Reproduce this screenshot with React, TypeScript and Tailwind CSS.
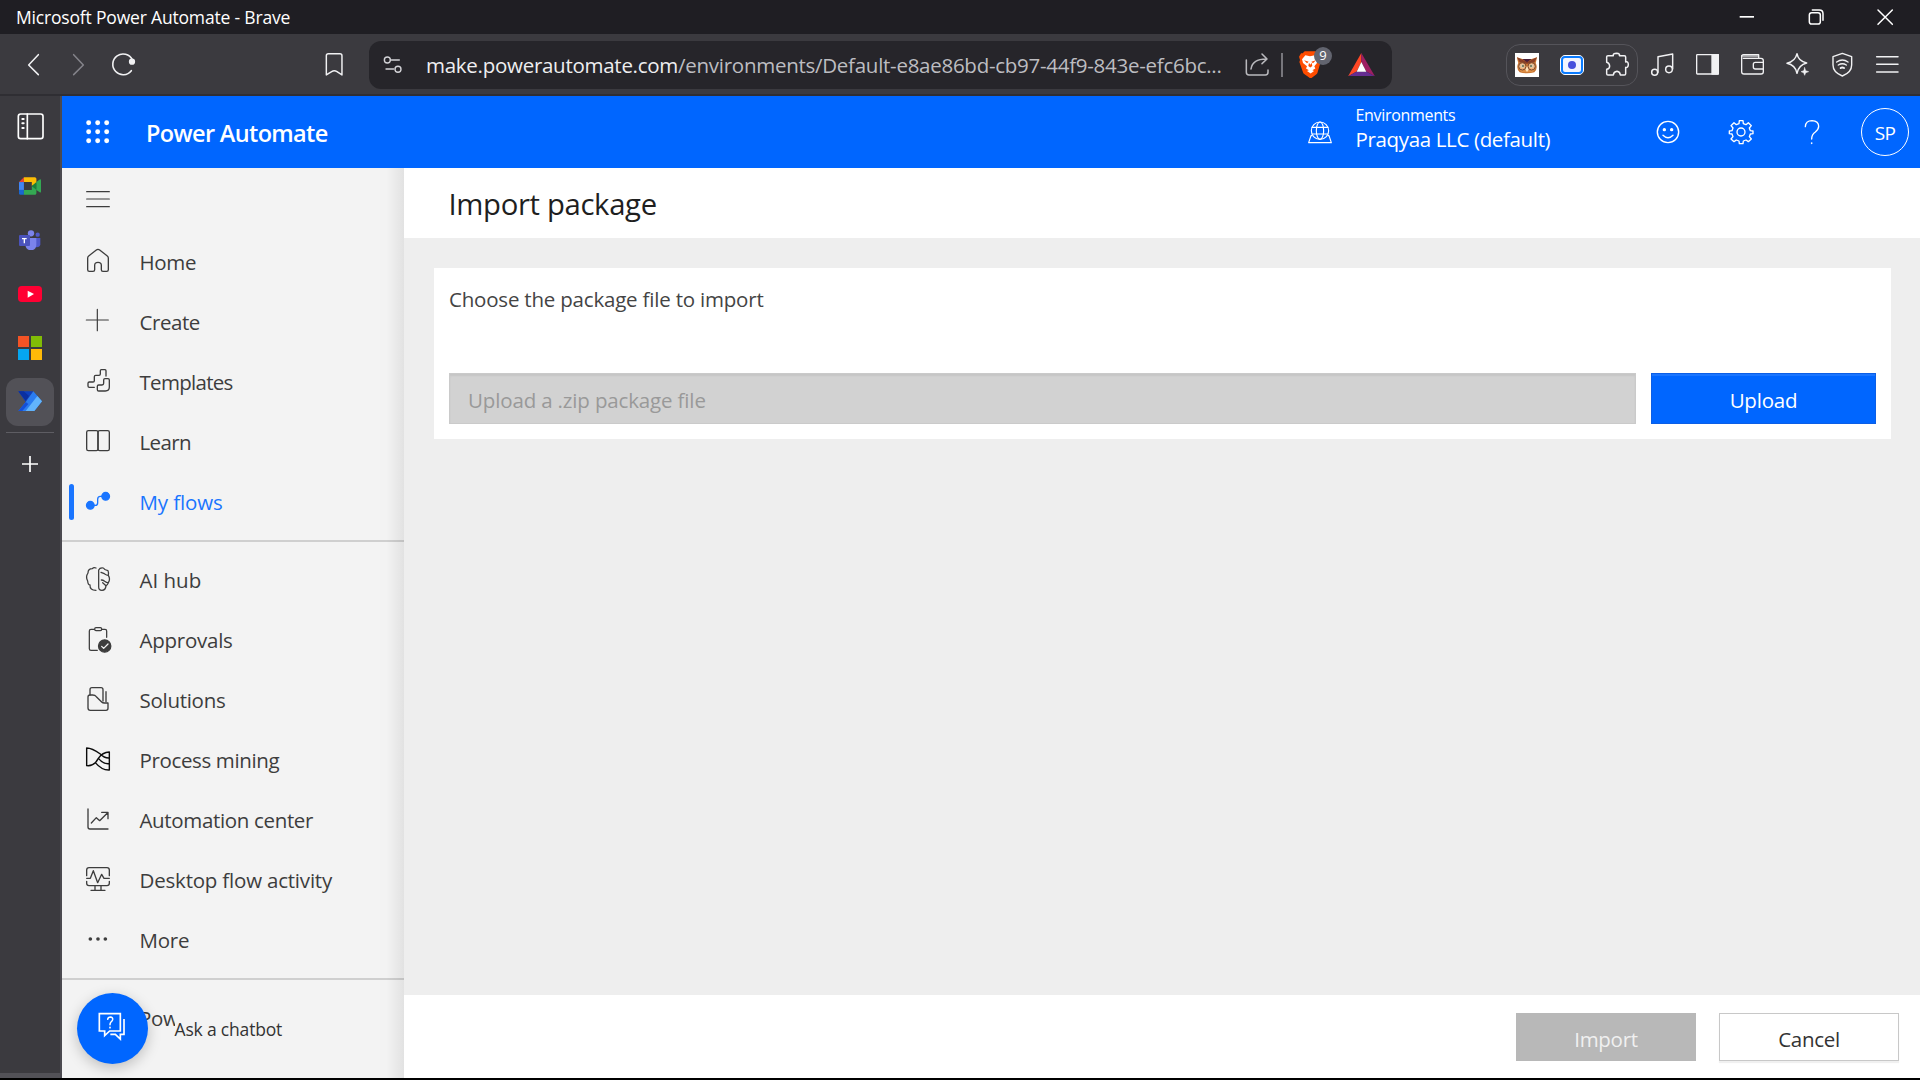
import type { ReactNode } from "react";
import clsx from "clsx";

type IcoProps = { vb: string; w?: number; h?: number; sw?: number; className?: string; children: ReactNode };

/** Line icon; the view boxes use a grid of three units per pixel. */
function Ico({ vb, w = 24, h = 24, sw = 3.6, className, children }: IcoProps) {
  return (
    <svg
      viewBox={vb}
      width={w}
      height={h}
      fill="none"
      stroke="currentColor"
      strokeWidth={sw}
      strokeLinecap="round"
      strokeLinejoin="round"
      className={clsx("block shrink-0 overflow-visible", className)}
    >
      {children}
    </svg>
  );
}

/* ---------- Window title bar ---------- */

function TitleBar() {
  return (
    <header className="flex h-[34px] shrink-0 items-center justify-between bg-[#1f1e23] pl-4 text-white">
      <span className="text-[17.5px] leading-[35px] tracking-[-0.18px]">Microsoft Power Automate - Brave</span>
      <div className="flex h-full pr-px">
        <div className="grid w-[69px] place-items-center">
          <Ico vb="0 0 48 48" w={16} h={16} sw={5}>
            <path d="M2 23.5H45" strokeLinecap="butt" />
          </Ico>
        </div>
        <div className="grid w-[69px] place-items-center">
          <Ico vb="985 28 48 48" w={16} h={16} sw={4.5}>
            <rect x="989" y="39" width="33" height="34" rx="7" />
            <path d="M998 31H1019Q1030 31 1030 42V62" />
          </Ico>
        </div>
        <div className="grid w-[69px] place-items-center">
          <Ico vb="1192 28 48 48" w={16} h={16} sw={4.5}>
            <path d="M1195 31L1238 74M1238 31L1195 74" />
          </Ico>
        </div>
      </div>
    </header>
  );
}

/* ---------- Browser toolbar ---------- */

function BraveLion() {
  return (
    <svg viewBox="297 153 66 83" width={22} height={27.6} className="block">
      <path d="M314 154H346L352 160L358 160L362 170L360 180L362 186L352 220Q350 224 332 236Q314 224 310 220L298 186L300 180L297 170L303 160L308 160Z" fill="#ff4d00" />
      <path
        d="M316 166L330 169L344 166L354 178L351 189L343 199L346 206L332 214L318 206L321 199L309 189L306 178Z"
        fill="#fff"
      />
      <path d="M312 181L326 185L321 190ZM348 181L334 185L339 190ZM327 188L325 198L331 203L337 198L335 188L331 194Z" fill="#ff4d00" />
      <path d="M321 213L332 208L342 213L332 221Z" fill="#fff" />
    </svg>
  );
}

function Owl() {
  return (
    <svg viewBox="0 0 72 72" width={24} height={24} className="block bg-white">
      <path d="M6 13L22 18H50L66 13Q64 24 62 30Q70 46 58 58Q36 64 14 58Q2 46 10 30Q7 22 6 13Z" fill="#c9732f" />
      <path d="M6 13L36 27L66 13L58 28L38 32H34L14 28Z" fill="#8a3f26" />
      <path d="M22 18H50L36 28Z" fill="#4a1f3a" />
      <path d="M10 46L20 58H52L62 46L50 52H22Z" fill="#dd8e45" />
      <circle cx="22" cy="40" r="11" fill="#f0b27a" stroke="#7a4a30" strokeWidth="3" />
      <circle cx="50" cy="40" r="11" fill="#f0b27a" stroke="#7a4a30" strokeWidth="3" />
      <circle cx="22" cy="39" r="6" fill="#d9c9ae" />
      <circle cx="50" cy="39" r="6" fill="#d9c9ae" />
      <circle cx="24" cy="39" r="3" fill="#5d6b50" />
      <circle cx="48" cy="39" r="3" fill="#5d6b50" />
      <path d="M36 38L41 50L36 57L31 50Z" fill="#fbe0b8" />
    </svg>
  );
}

function Slot({ children }: { children: ReactNode }) {
  return <div className="grid h-full w-[45px] shrink-0 place-items-center">{children}</div>;
}

function Toolbar() {
  return (
    <div className="flex h-[62px] shrink-0 items-center border-b-2 border-[#2f2e33] bg-[#3b3a3f] pt-px text-[#f1f1f3]">
      <div className="flex w-[369px] shrink-0 items-center pl-[26px]">
        <Ico vb="78 158 45 72" w={15} h={24} sw={4.6}>
          <path d="M115 163L86 194L115 223" />
        </Ico>
        <Ico vb="213 158 45 72" w={15} h={24} sw={4.6} className="ml-[30px] text-[#84838a]">
          <path d="M221 163L250 194L221 223" />
        </Ico>
        <Ico vb="332 157 75 75" w={25} h={25} sw={4.8} className="ml-[24.500px]">
          <path d="M393 213A31 31 0 1 1 396 180" />
          <circle cx="395" cy="186" r="7" fill="currentColor" />
        </Ico>
        <Ico vb="976 157 55 73" w={18.3} h={24.3} sw={4.4} className="ml-[189.500px]">
          <path d="M980 226V168Q980 162 986 162H1021Q1027 162 1027 168V226L1012 216Q1004 211 996 216Z" />
        </Ico>
      </div>

      <div className="flex h-12 w-[1023px] shrink-0 items-center rounded-xl bg-[#26252a]">
        <Ico vb="1150 166 60 58" w={20} h={19.3} sw={4.2} className="ml-[14px] text-[#d3d3d7]">
          <circle cx="1163" cy="181" r="9" />
          <path d="M1175 181H1199M1159 208H1182" />
          <circle cx="1195" cy="209" r="9" />
        </Ico>
        <span className="ml-[23px] w-[799px] shrink-0 pt-px text-[20.5px] leading-[47px] tracking-[-0.27px] whitespace-nowrap text-[#bdbdc1]">
          <span className="text-[#eeeef0]">make.powerautomate.com</span>
          /environments/Default-e8ae86bd-cb97-44f9-843e-efc6bc...
        </span>
        <Ico vb="136 160 75 75" w={25} h={25} sw={4.6} className="ml-5 text-[#b9b9bd]">
          <path d="M140 184V221Q140 229 148 229H197Q205 229 205 221V214" />
          <path d="M154 211Q158 181 200 181M187 166L202 181L187 195" />
        </Ico>
        <div className="ml-[11px] h-6 w-0.5 bg-[#77767c]" />
        <div className="relative ml-4">
          <BraveLion />
          <div className="absolute top-[-4px] left-[15px] grid h-[18px] w-[18px] place-items-center rounded-full bg-[#62646f] text-[13px] leading-none text-white">
            9
          </div>
        </div>
        <svg viewBox="445 158 81 70" width={27} height={23.5} className="ml-[27px] block">
          <path d="M485 158L485 185L471 213L445 228Z" fill="#ff4724" />
          <path d="M485 158L526 228L500 213L485 185Z" fill="#9e1f63" />
          <path d="M445 228L471 213H500L526 228Z" fill="#662d91" />
          <path d="M485 185L500 214H471Z" fill="#fff" />
        </svg>
      </div>

      <div className="ml-[114px] flex h-[42px] w-[132px] shrink-0 items-center justify-center rounded-[14px] border border-[#55545a]">
        <Slot>
          <Owl />
        </Slot>
        <Slot>
          <div className="grid h-5 w-6 place-items-center rounded-[5px] border border-white bg-white">
            <div className="grid h-[18px] w-[22px] place-items-center rounded-[4px] border-2 border-[#0a7bff] bg-[#f2f5ff]">
              <div className="h-2 w-2 rounded-full bg-[#4650dc]" />
            </div>
          </div>
        </Slot>
        <Slot>
          <Ico vb="375 160 75 75" w={25} h={25} sw={4.4}>
            <path d="M380 174Q380 171 384 171H400Q398 164 410 164Q421 165 418 171H433Q437 171 437 175V190Q445 187 445 198Q444 208 437 206V225Q437 229 433 229H421Q420 219 411 218Q401 219 400 229H384Q380 229 380 225V212Q389 211 389 202Q388 193 380 191Z" />
          </Ico>
        </Slot>
      </div>
      <div className="ml-0.5 flex h-full items-center">
        <Slot>
          <Ico vb="511 159 75 75" w={25} h={25} sw={4.4}>
            <circle cx="525" cy="220" r="9" />
            <circle cx="568" cy="211" r="10" />
            <path d="M535 220V173L579 165V210" />
          </Ico>
        </Slot>
        <Slot>
          <Ico vb="645 157 75 75" w={25} h={25} sw={4}>
            <rect x="650" y="165" width="65" height="58" rx="2" />
            <path d="M696 165H715V223H696Z" fill="currentColor" />
          </Ico>
        </Slot>
        <Slot>
          <Ico vb="780 157 75 75" w={25} h={25} sw={4}>
            <path d="M785 168V216Q785 223 792 223H843Q850 223 850 216V183Q850 176 843 176H790" />
            <path d="M787 169H835" stroke="#a3a3a7" strokeWidth="8" strokeLinecap="butt" />
            <path d="M785 171Q785 165 791 165H836V176M850 188H826Q820 188 820 194V202Q820 208 826 208H850" />
          </Ico>
        </Slot>
        <Slot>
          <Ico vb="915 157 75 75" w={25} h={25} sw={4.4}>
            <path d="M951 162Q955 185 980 190Q956 196 951 221Q946 196 921 191Q946 185 951 162Z" />
            <path d="M974 204L977 213L986 216L977 219L974 227L971 219L963 216L971 213Z" fill="currentColor" strokeWidth="1.5" />
          </Ico>
        </Slot>
        <Slot>
          <Ico vb="1050 157 75 75" w={25} h={25} sw={4.2}>
            <path d="M1087 161L1115 171V196Q1115 218 1087 229Q1059 218 1059 196V171Z" />
            <path d="M1070 187Q1087 175 1104 187M1075 196Q1087 188 1099 196" />
            <path d="M1082 205Q1087 202 1092 205" strokeWidth="6" />
          </Ico>
        </Slot>
        <Slot>
          <Ico vb="1185 157 75 75" w={25} h={25} sw={4.6}>
            <path d="M1190 171H1254M1190 194H1254M1190 217H1254" />
          </Ico>
        </Slot>
      </div>
    </div>
  );
}

/* ---------- Browser sidebar ---------- */

function Cell({ children }: { children: ReactNode }) {
  return <div className="grid h-[54px] w-full shrink-0 place-items-center">{children}</div>;
}

function BrowserSidebar() {
  return (
    <aside className="flex w-[62px] shrink-0 flex-col border-r-2 border-[#4b4a50] bg-[#3b3a3f] text-white">
      <div className="flex flex-1 flex-col items-center">
        <div className="grid h-[63px] w-full place-items-center pb-[2px] pl-[1px]">
          <Ico vb="51 339 81 81" w={27} h={27} sw={5}>
            <rect x="55" y="342" width="74" height="74" rx="7" />
            <path d="M82 342V416" />
            <path d="M67 357H71M67 370H71M67 384H71" strokeWidth="6" />
          </Ico>
        </div>
        <Cell>
          <svg viewBox="57 531 67 54" width={22} height={18} className="block">
            <path d="M57 546L72 531V546Z" fill="#ea4335" />
            <path d="M57 546H72V570H57Z" fill="#4285f4" />
            <path d="M57 570H72V585H62Q57 585 57 580Z" fill="#1967d2" />
            <path d="M72 531H105Q110 531 110 536V550L96 558V546H72Z" fill="#fbbc04" />
            <path d="M72 570H96V558L110 566V580Q110 585 105 585H72Z" fill="#34a853" />
            <path d="M96 558L110 546V570Z" fill="#188038" />
            <path d="M110 546L120 538Q124 536 124 541V575Q124 580 120 577L110 570Z" fill="#34a853" />
          </svg>
        </Cell>
        <Cell>
          <svg viewBox="57 29 66 62" width={22} height={20.7} className="block">
            <circle cx="113" cy="43" r="6.5" fill="#5059c9" />
            <path d="M98 53H121V72Q120 81 110 81Q102 81 98 74Z" fill="#5059c9" />
            <circle cx="93" cy="39" r="9.5" fill="#7b83eb" />
            <path d="M78 53H109V73Q108 90 92 90Q78 89 76 73Z" fill="#7b83eb" />
            <rect x="57" y="44" width="33" height="33" rx="3" fill="#4b53bc" />
            <path d="M66 53H80V56.500H75V69H71V56.500H66Z" fill="#fff" />
          </svg>
        </Cell>
        <Cell>
          <svg viewBox="0 0 72 48" width={24} height={16} className="block">
            <rect width="72" height="48" rx="11" fill="#ff0033" />
            <path d="M29 14L48 24L29 35Z" fill="#fff" />
          </svg>
        </Cell>
        <Cell>
          <div className="grid grid-cols-2 gap-0.5">
            <div className="h-[11px] w-[11px] bg-[#f35325]" />
            <div className="h-[11px] w-[11px] bg-[#81bc06]" />
            <div className="h-[11px] w-[11px] bg-[#05a6f0]" />
            <div className="h-[11px] w-[11px] bg-[#ffba08]" />
          </div>
        </Cell>
        <Cell>
          <div className="grid h-12 w-12 place-items-center rounded-xl bg-[#525157]">
            <svg viewBox="53 513 72 62" width={24} height={20.7} className="mt-[-2px] block">
              <path d="M54 514H99L76 546Z" fill="#0d3fbf" />
              <path d="M54 514L76 542L86 528L70 514Z" fill="#0b2fa0" />
              <path d="M99 514L125 544L102 573H54L76 546Z" fill="#2a7cf0" />
              <path d="M111 528L125 544L102 573H76Z" fill="#62b4fb" />
              <path d="M54 573L76 546L84 552L66 573Z" fill="#1550d8" />
            </svg>
          </div>
        </Cell>
        <div className="mt-[3px] h-px w-12 shrink-0 bg-[#5e5d63]" />
        <Ico vb="66 708 48 48" w={16} h={16} sw={5} className="mt-[23px]">
          <path d="M90 708V756M66 732H114" strokeLinecap="butt" />
        </Ico>
      </div>
      <div className="h-[5px] bg-[#525157]" />
    </aside>
  );
}

/* ---------- Power Automate header ---------- */

function AppHeader() {
  return (
    <header className="flex h-[72px] shrink-0 items-center bg-[#0066ff] text-white">
      <Ico vb="257 359 72 72" className="ml-6" sw={0}>
        {[367, 394, 421].map((y) => [265, 292, 319].map((x) => <circle key={x + y} cx={x} cy={y} r="7.4" fill="currentColor" />))}
      </Ico>
      <span className="mt-0.5 ml-9 w-[240px] text-[23.5px] leading-8 font-semibold tracking-[-0.65px]">Power Automate</span>
      <div className="ml-auto flex items-center">
        <Ico vb="324 362 72 69" w={24} h={23} sw={3.4}>
          <circle cx="360" cy="391" r="26" />
          <ellipse cx="360" cy="391" rx="11" ry="26" />
          <path d="M336 381H384M336 401H384" />
          <path d="M336 406H333L326 427H394L387 406H384" />
        </Ico>
        <div className="ml-[24px] flex w-[218px] flex-col pb-[7px]">
          <span className="h-[22px] text-[16px] leading-[22px] tracking-[-0.32px]">Environments</span>
          <span className="h-[27px] text-[20.5px] leading-[27px] tracking-[-0.35px]">Praqyaa LLC (default)</span>
        </div>
      </div>
      <Ico vb="528 360 72 72" className="ml-[82px]" sw={4.2}>
        <circle cx="564" cy="396" r="32" />
        <circle cx="553" cy="389" r="3" fill="currentColor" />
        <circle cx="575" cy="389" r="3" fill="currentColor" />
        <path d="M549 406Q564 421 579 406" />
      </Ico>
      <Ico vb="747 360 72 72" className="ml-[49px]" sw={4}>
        <circle cx="783" cy="396" r="12" />
        <path d="M778 362L777 371L769 374L762 368L753 377L759 384L756 392L748 393V401L756 402L759 410L753 417L762 425L769 420L777 423L778 431H789L790 423L798 420L805 425L814 417L808 410L811 402L819 401V393L811 392L808 384L814 377L805 368L798 374L790 371L789 362H778Z" />
      </Ico>
      <Ico vb="961 360 72 72" className="ml-[47.500px]" sw={4}>
        <path d="M977 380Q978 362 997 362Q1017 363 1017 379Q1017 388 1007 396Q996 404 996 417" />
        <path d="M996 429V430" strokeWidth="5" />
      </Ico>
      <div className="mr-[11px] ml-[37px] grid h-12 w-12 place-items-center rounded-full border border-white">
        <span className="mt-0.5 text-[19px] leading-6 font-medium tracking-[-0.6px]">SP</span>
      </div>
    </header>
  );
}

/* ---------- Navigation ---------- */

type NavItem = { label: string; tracking: string; icon: ReactNode; active?: boolean };

const primary: NavItem[] = [
  {
    label: "Home",
    tracking: "tracking-[-0.3px]",
    icon: (
      <Ico vb="258 84 72 72" sw={4}>
        <path d="M263 114Q263 110 267 107L289 90Q294 86 299 90L321 107Q325 110 325 114V149Q325 154 320 154H309Q304 154 304 149V136Q304 127 294 127Q284 127 284 136V149Q284 154 279 154H268Q263 154 263 149Z" />
      </Ico>
    ),
  },
  {
    label: "Create",
    tracking: "tracking-[-0.45px]",
    icon: (
      <Ico vb="258 264 72 72">
        <path d="M292 268V332M259 300H325" />
      </Ico>
    ),
  },
  {
    label: "Templates",
    tracking: "tracking-[-0.7px]",
    icon: (
      <Ico vb="258 444 72 72" sw={4}>
        <path d="M318 468V452Q318 449 315 449H304Q301 449 301 452V462Q301 466 297 466H287Q283 466 283 470V482Q283 486 279 486H268Q264 486 264 490V498Q264 502 268 502H283" />
        <path d="M315 476H324Q328 476 328 480V501Q328 513 316 513H296Q292 513 292 509V499Q292 495 296 495H306Q311 495 311 490V480Q311 476 315 476Z" />
      </Ico>
    ),
  },
  {
    label: "Learn",
    tracking: "tracking-[-0.65px]",
    icon: (
      <Ico vb="258 625 72 72" sw={4}>
        <rect x="260" y="633" width="34" height="60" rx="5" />
        <rect x="294" y="633" width="34" height="60" rx="5" />
      </Ico>
    ),
  },
  {
    label: "My flows",
    tracking: "tracking-[-0.1px]",
    active: true,
    icon: (
      <Ico vb="258 804 72 72" sw={4}>
        <circle cx="271" cy="856" r="11.500" fill="currentColor" />
        <circle cx="317" cy="829" r="11.500" fill="currentColor" />
        <path d="M275 856H286Q293 856 293 848V838Q293 829 301 829H312" />
      </Ico>
    ),
  },
];

const secondary: NavItem[] = [
  {
    label: "AI hub",
    tracking: "tracking-[0px]",
    icon: (
      <Ico vb="258 81 72 72" sw={3.8}>
        <path d="M288 84Q281 81 277 86Q264 86 264 99Q256 110 263 123Q264 135 270 135Q269 151 288 151" />
        <path d="M296 90Q300 82 310 84Q314 91 324 92Q327 100 325 106Q332 117 325 128Q323 135 318 137Q317 151 306 151Q296 151 296 141Z" />
        <path d="M303 97L313 101Q320 106 325 106M304 120Q309 120 314 124Q321 129 325 128M318 137L308 128" />
      </Ico>
    ),
  },
  {
    label: "Approvals",
    tracking: "tracking-[-0.25px]",
    icon: (
      <Ico vb="258 261 72 72" sw={3.8}>
        <path d="M283 268H273Q268 268 268 273V326Q268 331 273 331H292M305 268H315Q320 268 320 273V292" />
        <rect x="284" y="263" width="21" height="9" rx="4" />
        <circle cx="314" cy="318" r="18.500" fill="currentColor" />
        <path d="M305 319L311 325L324 312" stroke="#f3f3f3" />
      </Ico>
    ),
  },
  {
    label: "Solutions",
    tracking: "tracking-[-0.28px]",
    icon: (
      <Ico vb="258 441 72 72" sw={4}>
        <path d="M270 465V449Q270 443 276 443H303Q309 443 309 449V483M318 455V485" />
        <path d="M264 471Q264 465 270 465H278Q285 465 289 470L305 486Q308 489 313 489H324V505Q324 511 318 511H271Q264 511 264 504Z" />
      </Ico>
    ),
  },
  {
    label: "Process mining",
    tracking: "tracking-[-0.37px]",
    icon: (
      <Ico vb="258 621 72 72" sw={4.2} className="text-[#0c0c0c]">
        <path d="M260 624V677Q282 680 295 655Q307 637 328 636V690Q305 691 286 668M260 624Q276 624 301 642Q313 655 328 654M296 656Q309 673 328 671" />
      </Ico>
    ),
  },
  {
    label: "Automation center",
    tracking: "tracking-[-0.34px]",
    icon: (
      <Ico vb="258 801 72 72" sw={4}>
        <path d="M264 807V861Q264 867 270 867H324M274 849L289 833L299 842L323 818M305 817H324V836" />
      </Ico>
    ),
  },
  {
    label: "Desktop flow activity",
    tracking: "tracking-[-0.2px]",
    icon: (
      <Ico vb="258 141 72 72" sw={4}>
        <path d="M260 167V150Q260 143 267 143H321Q328 143 328 150V167M260 184V190Q260 197 267 197H321Q328 197 328 190V184M285 197V210M303 197V210M273 211H315" />
        <path d="M260 175H271L280 152L293 188L305 163L312 175H328" />
      </Ico>
    ),
  },
  {
    label: "More",
    tracking: "tracking-[-0.2px]",
    icon: (
      <Ico vb="258 321 72 72" sw={0}>
        <circle cx="271" cy="357" r="5.500" fill="currentColor" />
        <circle cx="294" cy="357" r="5.500" fill="currentColor" />
        <circle cx="316" cy="357" r="5.500" fill="currentColor" />
      </Ico>
    ),
  },
];

function NavRow({ item, lift }: { item: NavItem; lift: string }) {
  return (
    <a className={clsx("flex h-[60px] items-center", item.active ? "text-[#1a75ff]" : "text-[#3d3d3d]")}>
      <span className={clsx("ml-[7px] h-9 w-[5px] rounded-full", item.active && "bg-[#1a75ff]")} />
      <span className={clsx("ml-3", lift)}>{item.icon}</span>
      <span className={clsx("ml-[29.500px] text-[20.5px] leading-[60px] whitespace-nowrap", item.tracking)}>{item.label}</span>
    </a>
  );
}

function LeftNav() {
  return (
    <nav className="relative w-[342px] shrink-0 overflow-hidden bg-[#f3f3f3]">
      <div className="flex h-16 items-center pl-6 text-[#3d3d3d]">
        <Ico vb="258 570 72 57" w={24} h={19} sw={3.6} className="mt-[-2px]">
          <path d="M260 575H328M260 597H328M260 620H328" />
        </Ico>
      </div>
      {primary.map((i) => (
        <NavRow key={i.label} item={i} lift="pb-1" />
      ))}
      <div className="mt-2 h-0.5 bg-[#cfcfcf]" />
      <div className="h-2" />
      {secondary.map((i) => (
        <NavRow key={i.label} item={i} lift="pb-0.5" />
      ))}
      <div className="mt-2 h-0.5 bg-[#cfcfcf]" />
      <div className="mt-2 h-[60px] pl-[77px] text-[20.5px] leading-[60px] tracking-[-0.3px] text-[#3d3d3d]">Pow</div>

      <div className="absolute bottom-[14px] left-[15px] flex items-center">
        <div className="grid h-[71px] w-[71px] place-items-center rounded-full bg-[#0066ff] text-white shadow-[0_4px_14px_rgba(0,0,0,0.22)]">
          <Ico vb="294 576 84 84" w={28} h={28} sw={5} className="mt-[-5px] ml-[-1px]">
            <path d="M298 581H361V633H329L314 647V633H298Z" strokeLinejoin="miter" />
            <path d="M372 597V643H361V657L346 643H331" strokeLinejoin="miter" strokeLinecap="butt" />
            <path d="M323 598Q324 591 331 591Q339 592 338 599Q337 603 333 606Q330 609 330 614" strokeWidth="4.500" />
            <path d="M330 622V623" strokeWidth="5" />
          </Ico>
        </div>
        <span className="ml-[26.500px] bg-[#f3f3f3] text-[17.5px] leading-[46px] tracking-[-0.18px] text-[#333]">Ask a chatbot</span>
      </div>
      <div className="absolute top-0 right-0 h-full w-[18px] bg-linear-to-r from-black/0 to-black/[0.07]" />
    </nav>
  );
}

/* ---------- Import page ---------- */

function ImportPage() {
  return (
    <main className="flex flex-1 flex-col bg-[#eeeeee]">
      <div className="h-[70px] shrink-0 bg-white pl-[44.500px]">
        <h1 className="pt-px text-[29.3px] leading-[70px] tracking-[-0.35px] text-[#1f1f1f]">Import package</h1>
      </div>
      <div className="flex-1 pt-[30px] pr-[29px] pl-[30px]">
        <section className="h-[171px] bg-white px-[15px] pt-4">
          <p className="h-[89px] text-[20.5px] leading-[30px] tracking-[-0.2px] text-[#444]">Choose the package file to import</p>
          <div className="flex gap-[15px]">
            <div className="h-[51px] w-[1187px] border border-[#cacaca] bg-[#d2d2d2] pl-[18px] text-[20.5px] leading-[52px] tracking-[-0.15px] text-[#999] shadow-[inset_0_2px_2px_rgba(0,0,0,0.06)]">
              Upload a .zip package file
            </div>
            <button className="h-[51px] w-[225px] border border-[#0c5fe6] bg-[#0066ff] pt-[4px] text-[20.5px] tracking-[-0.2px] text-white shadow-[inset_0_2px_0_#1a75ff]">
              Upload
            </button>
          </div>
        </section>
      </div>
      <footer className="flex h-[83px] shrink-0 justify-end gap-[23px] bg-white pt-[18px] pr-[21px]">
        <button className="h-12 w-[180px] bg-[#b8b8b8] pt-1 text-[20.5px] tracking-[-0.3px] text-[#f0f0f0]">Import</button>
        <button className="h-12 w-[180px] border border-[#c8c8c8] bg-white pt-1 text-[20.5px] tracking-[-0.3px] text-[#333] shadow-[0_2px_1px_rgba(0,0,0,0.06)]">
          Cancel
        </button>
      </footer>
    </main>
  );
}

export default function App() {
  return (
    <div className="flex h-[1080px] w-[1920px] flex-col overflow-hidden border-b-2 border-black bg-white font-['Open_Sans','Noto_Sans',sans-serif]">
      <TitleBar />
      <Toolbar />
      <div className="flex min-h-0 flex-1">
        <BrowserSidebar />
        <div className="flex min-w-0 flex-1 flex-col">
          <AppHeader />
          <div className="flex min-h-0 flex-1">
            <LeftNav />
            <ImportPage />
          </div>
        </div>
      </div>
    </div>
  );
}
